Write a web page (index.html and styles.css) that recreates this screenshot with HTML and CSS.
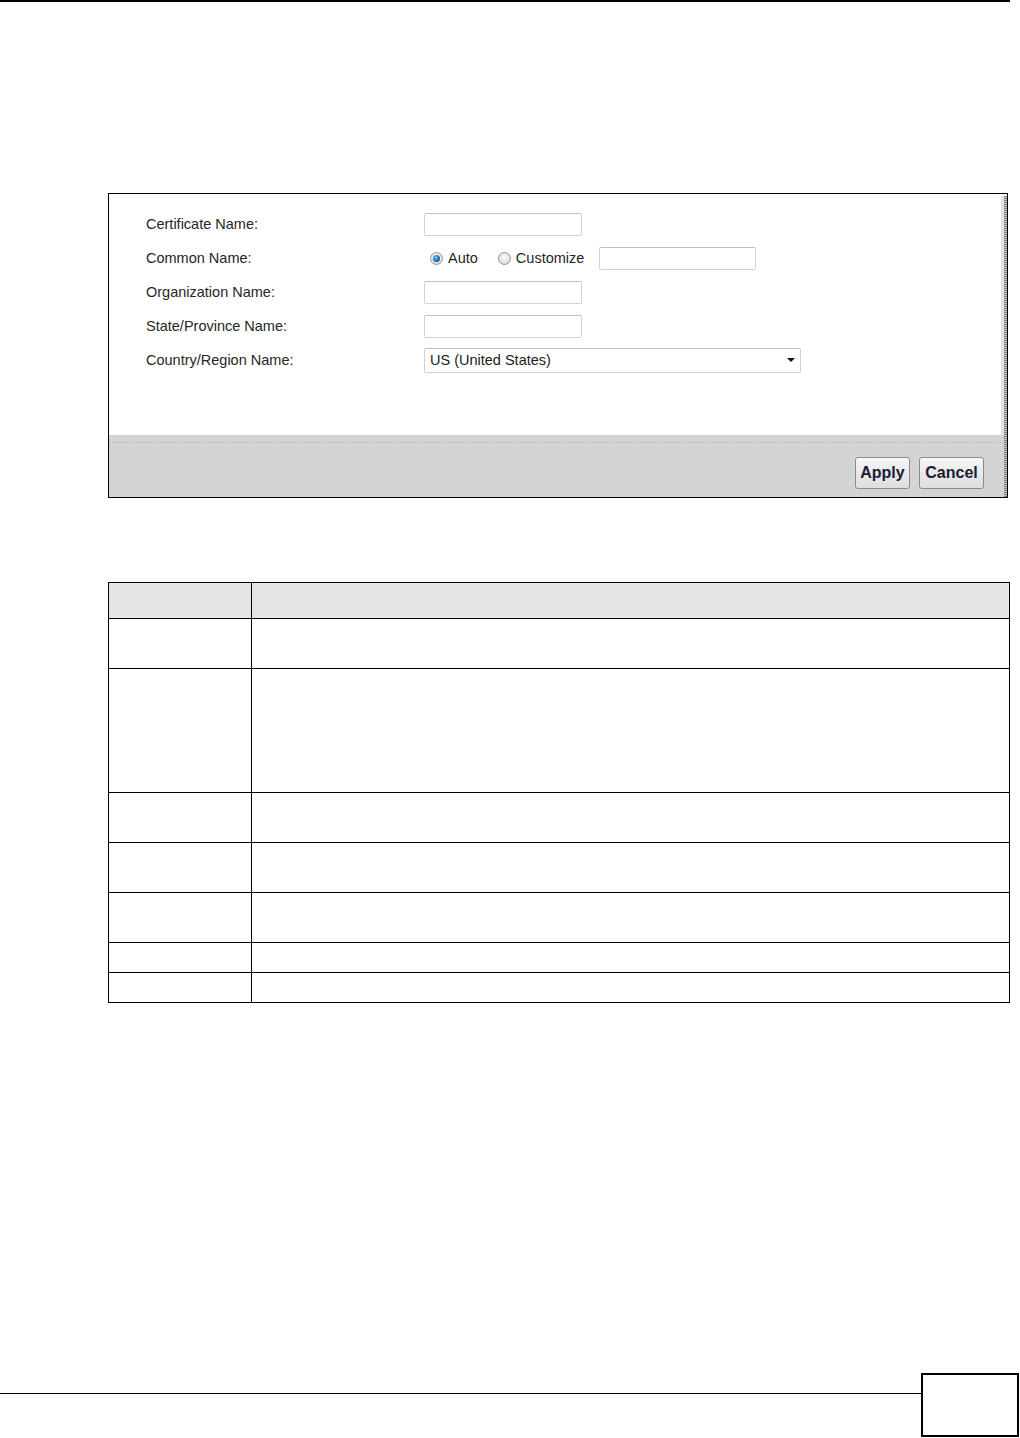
FILE: index.html
```html
<!DOCTYPE html>
<html>
<head>
<meta charset="utf-8">
<title>Certificate</title>
<link rel="stylesheet" href="styles.css">
</head>
<body>
<div class="page">
  <div class="top-rule"></div>

  <div class="shot">
    <div class="shot-main">
      <div class="form-area">
        <div class="fields">
          <div class="row">
            <span class="label">Certificate Name:</span>
            <input class="text" type="text">
          </div>
          <div class="row">
            <span class="label">Common Name:</span>
            <input class="radio first" type="radio" name="cn" checked>
            <span class="opt">Auto</span>
            <input class="radio second" type="radio" name="cn">
            <span class="opt">Customize</span>
            <input class="text custom" type="text">
          </div>
          <div class="row">
            <span class="label">Organization Name:</span>
            <input class="text" type="text">
          </div>
          <div class="row">
            <span class="label">State/Province Name:</span>
            <input class="text" type="text">
          </div>
          <div class="row">
            <span class="label">Country/Region Name:</span>
            <div class="select"><span>US (United States)</span><span class="arrow"></span></div>
          </div>
        </div>
        <div class="vbar"></div>
      </div>
      <div class="button-bar">
        <div class="dots"></div>
        <div class="buttons">
          <button class="btn apply">Apply</button>
          <button class="btn cancel">Cancel</button>
        </div>
      </div>
    </div>
    <div class="edge"></div>
  </div>

  <div class="desc-table">
    <div class="cell head c1"></div><div class="cell head c2"></div>
    <div class="cell c1"></div><div class="cell c2"></div>
    <div class="cell c1"></div><div class="cell c2"></div>
    <div class="cell c1"></div><div class="cell c2"></div>
    <div class="cell c1"></div><div class="cell c2"></div>
    <div class="cell c1"></div><div class="cell c2"></div>
    <div class="cell c1"></div><div class="cell c2"></div>
    <div class="cell c1 last"></div><div class="cell c2 last"></div>
  </div>

  <div class="page-foot">
    <div class="foot-rule"></div>
    <div class="page-box"></div>
  </div>
</div>
</body>
</html>
```

FILE: styles.css
```css
* { box-sizing: border-box; }

html, body {
  margin: 0;
  padding: 0;
  background: #ffffff;
}

body {
  font-family: "Liberation Sans", Arial, sans-serif;
  color: #222;
}

.page {
  width: 1020px;
  height: 1438px;
  display: flex;
  flex-direction: column;
}

.top-rule {
  width: 1010px;
  height: 2px;
  background: #000;
  flex: none;
}

/* ---------- screenshot frame ---------- */
.shot {
  margin: 191px 0 0 108px;
  width: 900px;
  height: 305px;
  border: 1px solid #000;
  display: flex;
  flex: none;
}

.shot-main {
  flex: 1;
  display: flex;
  flex-direction: column;
}

.form-area {
  height: 241px;
  display: flex;
  background: #fff;
}

.fields {
  flex: 1;
  padding: 13px 0 0 37px;
}

.vbar {
  width: 3px;
  margin-top: 2px;
  background: #e2e2e2;
}

.edge {
  width: 3px;
  margin-top: 2px;
  background: repeating-linear-gradient(to bottom, #808080 0 1px, #c4c4c4 1px 2px);
}

.row {
  height: 34px;
  display: flex;
  align-items: center;
  font-size: 14.5px;
  color: #262626;
}

.label {
  width: 278px;
  flex: none;
}

.text {
  width: 158px;
  height: 23px;
  border: 1px solid #d2d2d2;
  border-top-color: #c0c0c0;
  border-radius: 2px;
  background: #fff;
  margin: 0;
  padding: 0;
  outline: none;
}

.text.custom {
  margin-left: 15px;
  width: 157px;
}

.radio {
  appearance: none;
  -webkit-appearance: none;
  width: 13px;
  height: 13px;
  margin: 0;
  border-radius: 50%;
  border: 1px solid #949494;
  background: radial-gradient(circle at 50% 40%, #fbfbfb 0, #dedede 70%, #c8c8c8 100%);
  flex: none;
  position: relative;
}

.radio.first { margin-left: 6px; }
.radio.second { margin-left: 20px; }

.radio:checked::after {
  content: "";
  position: absolute;
  left: 2px;
  top: 2px;
  width: 7px;
  height: 7px;
  border-radius: 50%;
  background: radial-gradient(circle at 40% 35%, #7fc3f0 0, #1f6fb6 55%, #0b3f78 100%);
}

.opt {
  margin-left: 5px;
}

.select {
  width: 377px;
  height: 25px;
  border: 1px solid #d2d2d2;
  border-top-color: #c0c0c0;
  border-radius: 2px;
  display: flex;
  align-items: center;
  justify-content: space-between;
  padding: 0 4px 0 5px;
  font-size: 14.5px;
  color: #1c1c1c;
}

.arrow {
  width: 0;
  height: 0;
  border-left: 4px solid transparent;
  border-right: 4px solid transparent;
  border-top: 4px solid #111;
  margin-right: 1px;
}

/* ---------- button bar ---------- */
.button-bar {
  flex: 1;
  background: #d4d4d4;
  padding-top: 7px;
}

.dots {
  height: 1px;
  background: repeating-linear-gradient(to right, #a4a4a4 0 1px, transparent 1px 3px);
}

.buttons {
  margin-top: 14px;
  display: flex;
  justify-content: flex-end;
  gap: 9px;
  padding-right: 20px;
}

.btn {
  height: 32px;
  border: 1px solid #8b8b8b;
  border-radius: 3px;
  background: linear-gradient(to bottom, #f7f7f7 0%, #e9e9e9 50%, #dedede 100%);
  font-family: "Liberation Sans", Arial, sans-serif;
  font-weight: bold;
  font-size: 16px;
  color: #1b1b33;
  padding: 0;
  margin: 0;
}

.btn.apply { width: 55px; }
.btn.cancel { width: 65px; }

/* ---------- description table ---------- */
.desc-table {
  margin: 84px 0 0 108px;
  width: 902px;
  border: 1px solid #000;
  display: grid;
  grid-template-columns: 143px 1fr;
  grid-template-rows: 36px 50px 124px 50px 50px 50px 30px 29px;
  flex: none;
}

.cell {
  border-bottom: 1px solid #000;
}

.cell.c1 {
  border-right: 1px solid #000;
}

.cell.last {
  border-bottom: none;
}

.cell.head {
  background: #e6e6e6;
}

/* ---------- page footer ---------- */
.page-foot {
  margin-top: auto;
  margin-bottom: 1px;
  display: flex;
  align-items: flex-start;
  flex: none;
}

.foot-rule {
  width: 921px;
  height: 1px;
  margin-top: 20px;
  background: #000;
}

.page-box {
  width: 98px;
  height: 64px;
  border: 2px solid #000;
}
```
